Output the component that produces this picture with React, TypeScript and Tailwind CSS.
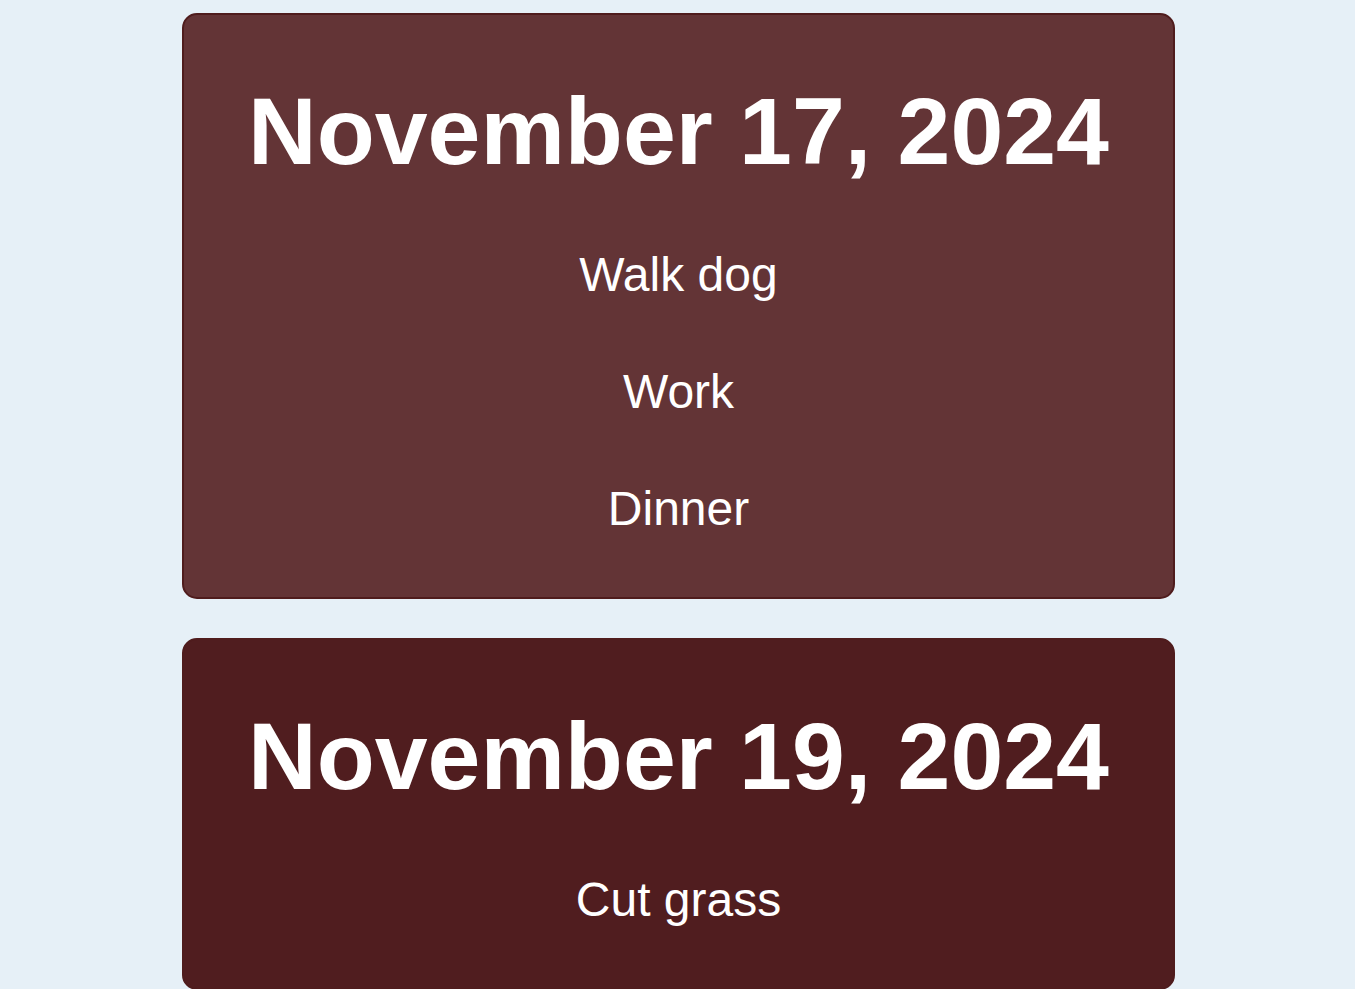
const days = [
  {
    date: "November 17, 2024",
    tasks: ["Walk dog", "Work", "Dinner"],
    card: "bg-[#633436]",
  },
  {
    date: "November 19, 2024",
    tasks: ["Cut grass"],
    card: "bg-[#501d1f]",
  },
];

export default function App() {
  return (
    <div className="min-h-screen bg-[#e6f0f7] pt-[13px] pb-10 font-['Liberation_Sans',Arial,sans-serif] text-white">
      <div className="ml-[182px] flex w-[993px] flex-col gap-[39px]">
        {days.map((day) => (
          <section
            key={day.date}
            className={`rounded-[15px] border-2 border-[#4f1c1d] ${day.card} pt-[68px] pb-[30px] text-center`}
          >
            <h1 className="text-[95px] font-bold leading-[96px]">{day.date}</h1>
            <ul className="mt-[37px]">
              {day.tasks.map((task) => (
                <li key={task} className="text-[48px] leading-[117px]">
                  {task}
                </li>
              ))}
            </ul>
          </section>
        ))}
      </div>
    </div>
  );
}
